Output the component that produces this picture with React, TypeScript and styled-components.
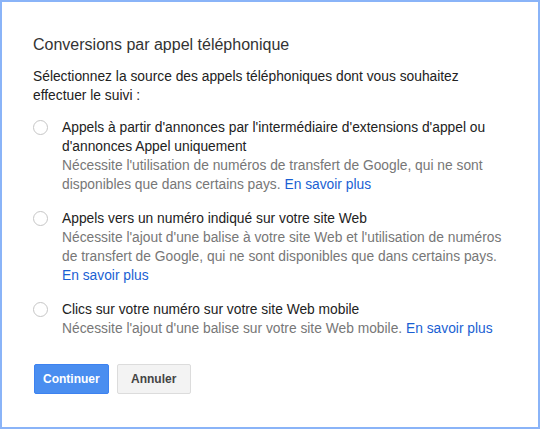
import { createGlobalStyle, styled } from "styled-components"

const Global = createGlobalStyle`
  html, body { margin: 0; padding: 0; background: #ffffff; }
  body { font-family: "Liberation Sans", Arial, sans-serif; }
`

const Frame = styled.div`
  box-sizing: border-box;
  width: 540px;
  height: 429px;
  border: 2px solid #8ab4f8;
  background: #ffffff;
  padding: 32px 31px 0 31px;
`

const Title = styled.h2`
  margin: 0;
  font-size: 16px;
  font-weight: normal;
  color: #333333;
  line-height: 22px;
`

const Intro = styled.p`
  margin: 11px 0 0 0;
  font-size: 13.8px;
  line-height: 19px;
  color: #222222;
`

const Options = styled.div`
  display: flex;
  flex-direction: column;
  gap: 15px;
  margin-top: 13px;
`

const Option = styled.label`
  display: flex;
  align-items: flex-start;
  gap: 14px;
  cursor: pointer;
`

const Radio = styled.span`
  flex: none;
  box-sizing: border-box;
  width: 15px;
  height: 15px;
  margin-top: 2px;
  border: 1px solid #c6c6c6;
  border-radius: 50%;
  background: #ffffff;
`

const Body = styled.div`
  font-size: 13.8px;
  line-height: 19px;
`

const Label = styled.div`
  color: #222222;
`

const Hint = styled.div`
  color: #777777;
`

const Link = styled.a`
  color: #1a5fd3;
  text-decoration: none;
`

const Actions = styled.div`
  display: flex;
  gap: 8px;
  margin-top: 26px;
  margin-left: 1px;
`

const Button = styled.button<{ $primary?: boolean }>`
  box-sizing: border-box;
  height: 30px;
  min-width: 74px;
  padding: 0 8px;
  border-radius: 2px;
  font-family: "Liberation Sans", Arial, sans-serif;
  font-size: 12px;
  font-weight: bold;
  cursor: pointer;
  border: 1px solid ${p => (p.$primary ? "#3d82f0" : "#dcdcdc")};
  background: ${p => (p.$primary ? "#4a8ef0" : "#f3f3f3")};
  color: ${p => (p.$primary ? "#ffffff" : "#444444")};
`

const options = [
  {
    label: "Appels à partir d'annonces par l'intermédiaire d'extensions d'appel ou d'annonces Appel uniquement",
    hint: "Nécessite l'utilisation de numéros de transfert de Google, qui ne sont disponibles que dans certains pays.",
  },
  {
    label: "Appels vers un numéro indiqué sur votre site Web",
    hint: "Nécessite l'ajout d'une balise à votre site Web et l'utilisation de numéros de transfert de Google, qui ne sont disponibles que dans certains pays.",
  },
  {
    label: "Clics sur votre numéro sur votre site Web mobile",
    hint: "Nécessite l'ajout d'une balise sur votre site Web mobile.",
  },
]

export default function App() {
  return (
    <>
      <Global />
      <Frame>
        <Title>Conversions par appel téléphonique</Title>
        <Intro>Sélectionnez la source des appels téléphoniques dont vous souhaitez effectuer le suivi :</Intro>
        <Options>
          {options.map(o => (
            <Option key={o.label}>
              <Radio />
              <Body>
                <Label>{o.label}</Label>
                <Hint>
                  {o.hint} <Link href="#">En savoir plus</Link>
                </Hint>
              </Body>
            </Option>
          ))}
        </Options>
        <Actions>
          <Button $primary>Continuer</Button>
          <Button>Annuler</Button>
        </Actions>
      </Frame>
    </>
  )
}
